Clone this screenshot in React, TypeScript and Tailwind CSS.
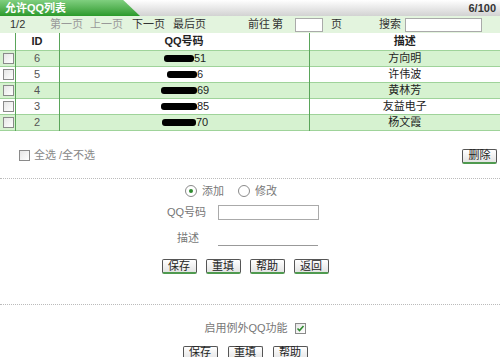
import React from 'react';

const rows = [
  { id: 6, bar: 30, tail: '51', desc: '方向明' },
  { id: 5, bar: 30, tail: '6', desc: '许伟波' },
  { id: 4, bar: 36, tail: '69', desc: '黄林芳' },
  { id: 3, bar: 36, tail: '85', desc: '友益电子' },
  { id: 2, bar: 34, tail: '70', desc: '杨文霞' },
];

function Box({ checked = false }: { checked?: boolean }) {
  return (
    <span className="inline-flex h-[11px] w-[11px] items-center justify-center border border-[#8a8a8a] bg-gradient-to-br from-[#e6e6e6] to-white align-middle">
      {checked && (
        <svg width="9" height="9" viewBox="0 0 9 9">
          <path d="M1.5 4.5 L3.5 6.5 L7.5 2" fill="none" stroke="#2f8a2f" strokeWidth="1.6" />
        </svg>
      )}
    </span>
  );
}

function Radio({ on = false }: { on?: boolean }) {
  return (
    <span className="inline-flex h-[12px] w-[12px] items-center justify-center rounded-full border border-[#8a8a8a] bg-white">
      {on && <span className="h-[4px] w-[4px] rounded-full bg-[#2f8a2f]" />}
    </span>
  );
}

function Btn({ children }: { children: React.ReactNode }) {
  return (
    <button className="h-[15px] w-[35px] rounded-[2px] border border-[#555] border-b-2 border-b-[#4f9a4f] bg-gradient-to-b from-white to-[#e4e4e4] text-[11px] leading-[11px] text-[#222]">
      {children}
    </button>
  );
}

export default function App() {
  return (
    <div
      className="h-[357px] w-[500px] overflow-hidden bg-white text-[11px] text-[#555]"
      style={{ fontFamily: '"Liberation Sans", "Noto Sans CJK SC", sans-serif' }}
    >
      <div className="relative flex h-[16px] items-center bg-gradient-to-b from-white to-[#d2d2d2]">
        <div className="flex h-full w-[140px] items-center bg-gradient-to-b from-[#7fcf7f] to-[#2a9a2a] pl-[5px] font-bold text-white [clip-path:polygon(0_0,88%_0,100%_100%,0_100%)]">
          允许QQ列表
        </div>
        <div className="ml-auto pr-[4px] font-bold text-[#333]">6/100</div>
      </div>

      <div className="flex h-[17px] items-center bg-[#e3f4de] text-[#333]">
        <span className="ml-[10px] w-[40px]">1/2</span>
        <span className="w-[40px] text-[#999]">第一页</span>
        <span className="w-[42px] text-[#999]">上一页</span>
        <span className="w-[41px]">下一页</span>
        <span className="w-[75px]">最后页</span>
        <span>前往</span>
        <span className="ml-[2px]">第</span>
        <span className="ml-[12px] h-[14px] w-[28px] border border-[#aaa] bg-white" />
        <span className="ml-[8px]">页</span>
        <span className="ml-[37px]">搜索</span>
        <span className="ml-[4px] h-[14px] w-[77px] border border-[#aaa] bg-white" />
      </div>

      <table className="w-full border-collapse text-center leading-[14px]">
        <thead>
          <tr className="h-[17px] bg-white text-[#222]">
            <th className="w-[15px] border-r border-[#5aa55a]"></th>
            <th className="w-[44px] border-r border-[#5aa55a] font-bold">ID</th>
            <th className="w-[250px] border-r border-[#5aa55a] font-bold">QQ号码</th>
            <th className="font-bold">描述</th>
          </tr>
        </thead>
        <tbody>
          {rows.map((r, i) => (
            <tr
              key={r.id}
              className={`h-[16px] border-t border-[#9fd39a] ${i % 2 === 0 ? 'bg-[#d6f2d0]' : 'bg-white'}`}
            >
              <td className="border-r border-[#5aa55a] pl-[3px] text-left align-middle leading-none">
                <Box />
              </td>
              <td className="border-r border-[#5aa55a]">{r.id}</td>
              <td className="border-r border-[#5aa55a] text-[#222]">
                <span className="inline-flex items-center pl-[2px]">
                  <span className="inline-block h-[7px] rounded-[3px] bg-black" style={{ width: r.bar }} />
                  <span>{r.tail}</span>
                </span>
              </td>
              <td className="text-[#222]">{r.desc}</td>
            </tr>
          ))}
          <tr className="h-[1px] border-t border-[#9fd39a]">
            <td colSpan={4}></td>
          </tr>
        </tbody>
      </table>

      <div className="mt-[16px] flex items-center px-[19px] pr-[3px]">
        <Box />
        <span className="ml-[4px] text-[#888]">全选 /全不选</span>
        <div className="ml-auto">
          <Btn>删除</Btn>
        </div>
      </div>

      <div className="mt-[14px] border-t border-dotted border-[#bbb]" />

      <div className="mt-[4px] flex items-center justify-center gap-[5px] pr-[38px] text-[#777]">
        <Radio on />
        <span className="mr-[9px]">添加</span>
        <Radio />
        <span>修改</span>
      </div>

      <div className="mt-[5px] flex items-center">
        <span className="w-[206px] text-right text-[#777]">QQ号码</span>
        <span className="ml-[12px] h-[15px] w-[101px] border border-[#aaa] bg-white" />
      </div>

      <div className="mt-[9px] flex items-end">
        <span className="w-[199px] text-right text-[#777]">描述</span>
        <span className="ml-[19px] h-[5px] w-[100px] border-b border-[#999]" />
      </div>

      <div className="mt-[13px] flex justify-center gap-[9px] pr-[10px]">
        <Btn>保存</Btn>
        <Btn>重填</Btn>
        <Btn>帮助</Btn>
        <Btn>返回</Btn>
      </div>

      <div className="mt-[30px] border-t border-dotted border-[#bbb]" />

      <div className="mt-[15px] flex items-center justify-center gap-[7px] pl-[10px] text-[#777]">
        <span>启用例外QQ功能</span>
        <Box checked />
      </div>

      <div className="mt-[9px] flex justify-center gap-[10px] pr-[10px]">
        <Btn>保存</Btn>
        <Btn>重填</Btn>
        <Btn>帮助</Btn>
      </div>
    </div>
  );
}
